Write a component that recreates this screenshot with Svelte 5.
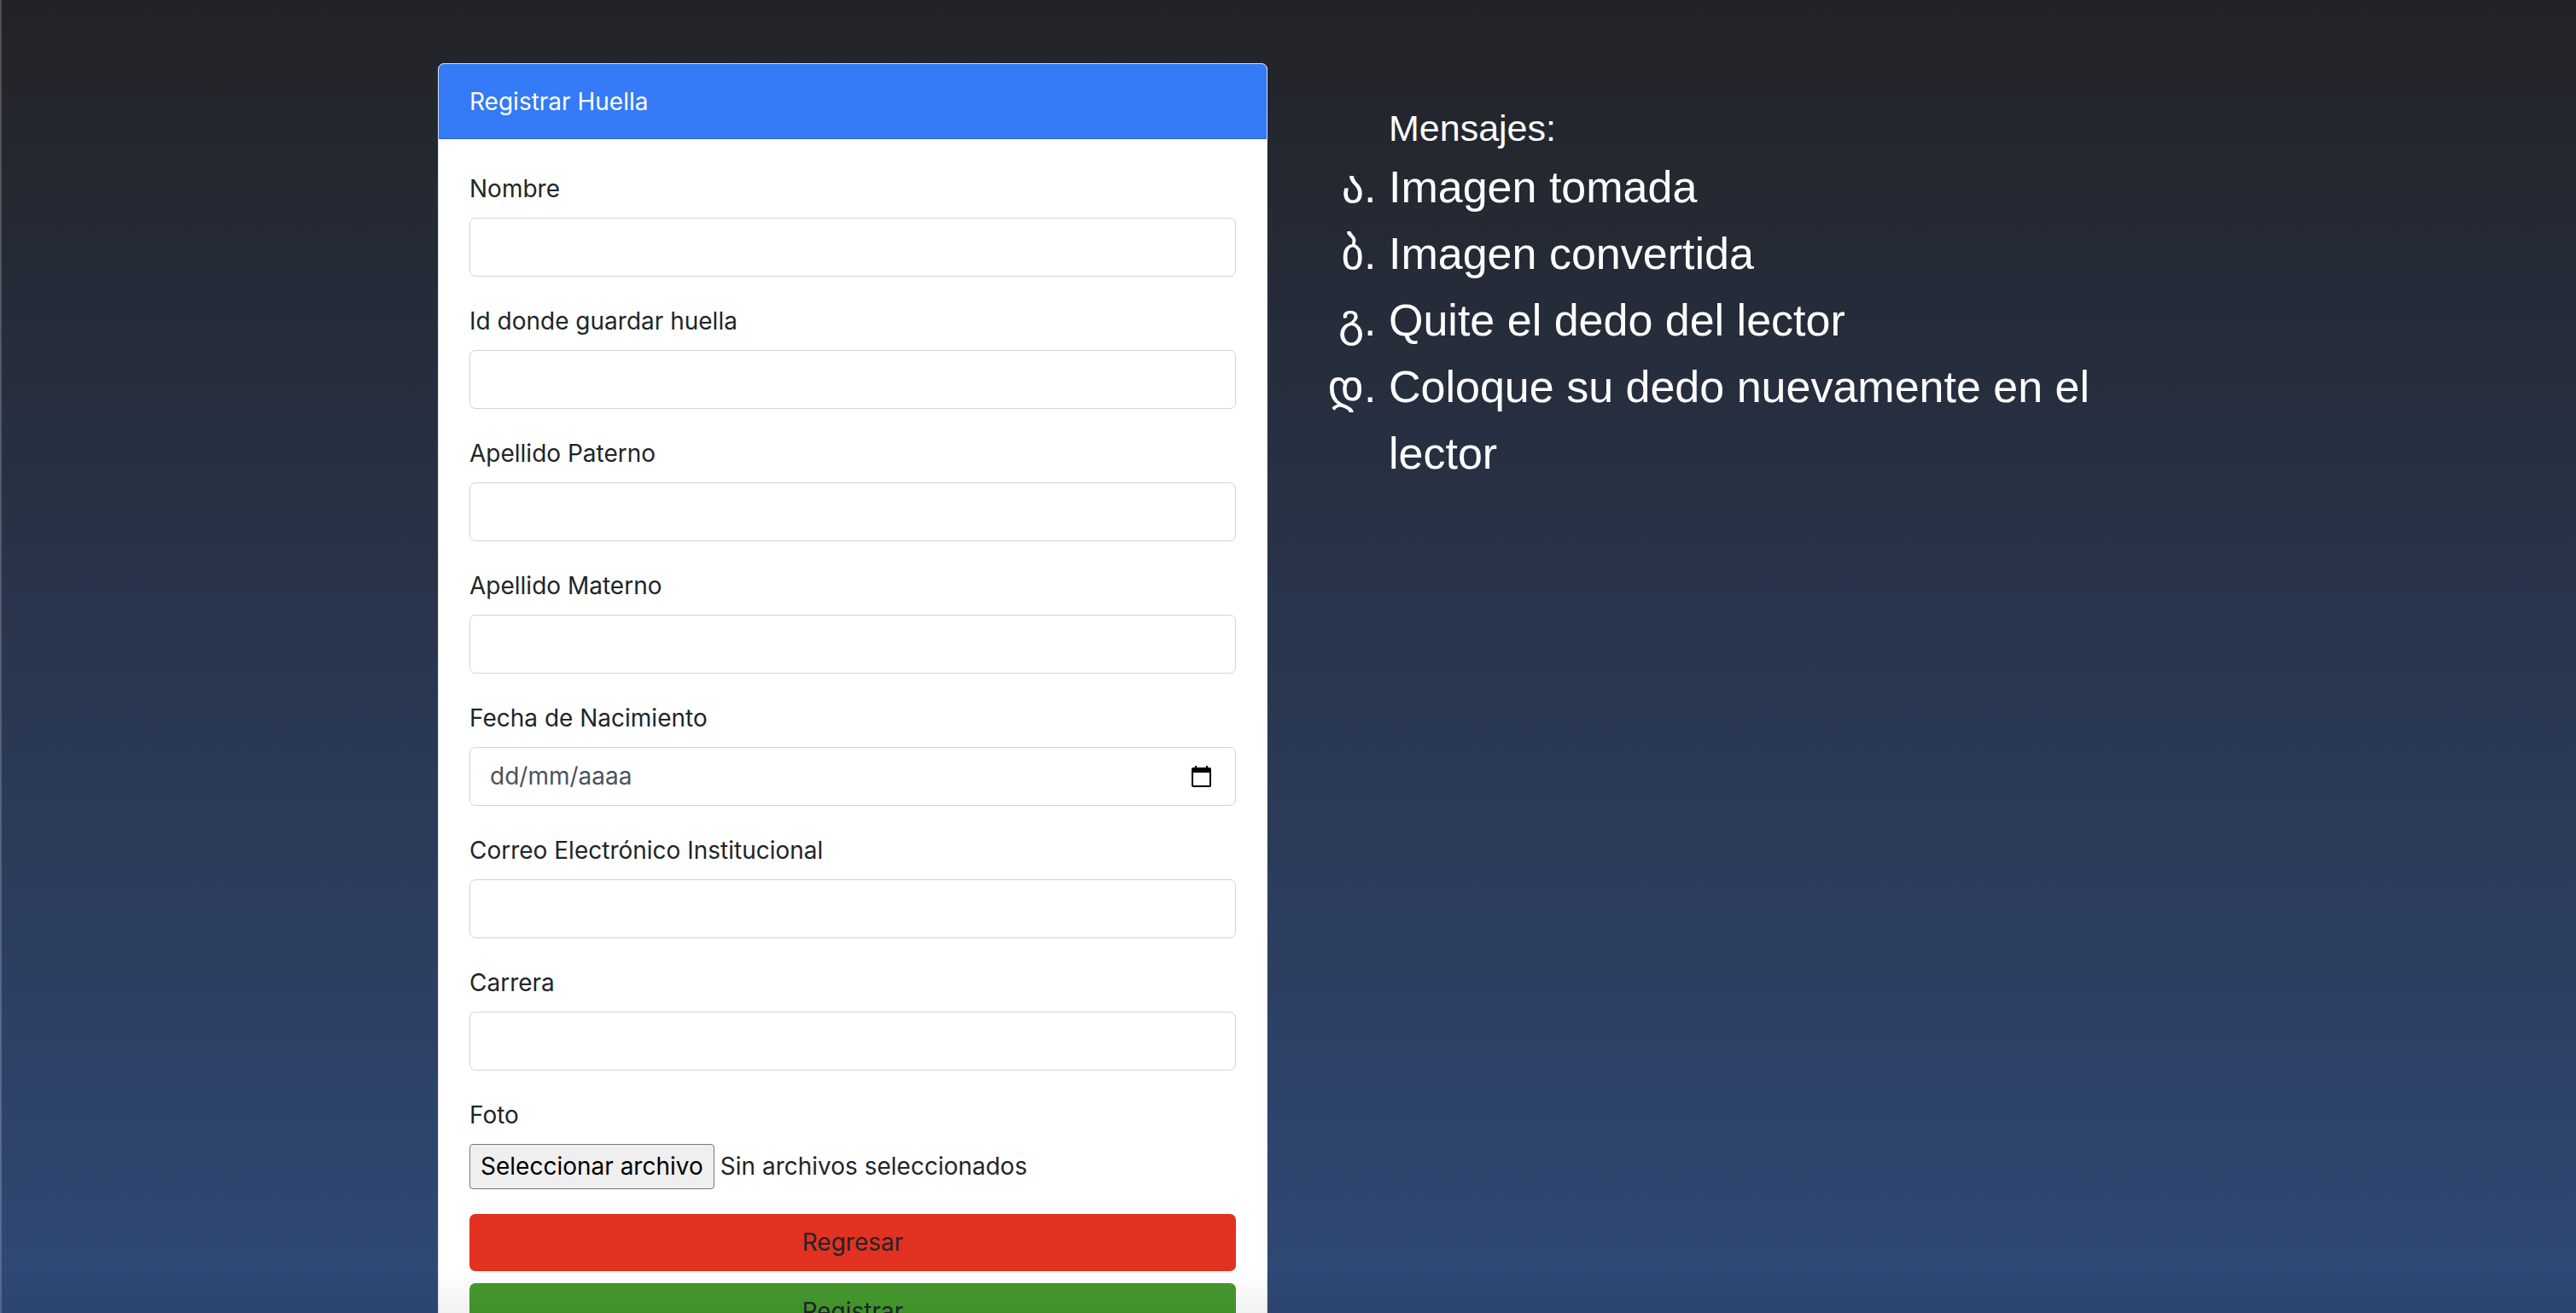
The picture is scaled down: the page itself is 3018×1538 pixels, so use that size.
<script>
  const before = [
    { id: 'nombre', label: 'Nombre' },
    { id: 'id-huella', label: 'Id donde guardar huella' },
    { id: 'apellido-paterno', label: 'Apellido Paterno' },
    { id: 'apellido-materno', label: 'Apellido Materno' }
  ];
  const after = [
    { id: 'correo', label: 'Correo Electrónico Institucional' },
    { id: 'carrera', label: 'Carrera' }
  ];
  const messages = [
    'Imagen tomada',
    'Imagen convertida',
    'Quite el dedo del lector',
    'Coloque su dedo nuevamente en el lector'
  ];
  let fileInput = $state();
  let files = $state();
</script>

{#snippet field(item)}
  <div class="field">
    <label for={item.id}>{item.label}</label>
    <div class="control"><input id={item.id} type="text" /></div>
  </div>
{/snippet}

<div class="page">
  <main class="layout">
    <section class="card">
      <header>Registrar Huella</header>
      <form onsubmit={(e) => e.preventDefault()}>
        {#each before as item}{@render field(item)}{/each}
        <div class="field">
          <label for="fecha">Fecha de Nacimiento</label>
          <div class="control">
            <input id="fecha" type="text" placeholder="dd/mm/aaaa" />
            <button class="calendar" type="button" aria-label="Abrir calendario">
              <svg viewBox="0 0 23 25" width="23" height="25" aria-hidden="true">
                <path d="M4 0h2v2h11V0h2v2h2a2 2 0 0 1 2 2v19a2 2 0 0 1-2 2H2a2 2 0 0 1-2-2V4a2 2 0 0 1 2-2h2zM2 8v15h19V8z" fill-rule="evenodd" />
              </svg>
            </button>
          </div>
        </div>
        {#each after as item}{@render field(item)}{/each}
        <div class="field">
          <label for="foto">Foto</label>
          <div class="file">
            <input id="foto" type="file" bind:this={fileInput} bind:files hidden />
            <button class="choose" type="button" onclick={() => fileInput.click()}>Seleccionar archivo</button>
            <span>{files?.[0]?.name ?? 'Sin archivos seleccionados'}</span>
          </div>
        </div>
        <div class="actions">
          <button class="back" type="button">Regresar</button>
          <button class="submit" type="submit">Registrar</button>
        </div>
      </form>
    </section>

    <section class="messages">
      <h2>Mensajes:</h2>
      <ol>
        {#each messages as message}<li>{message}</li>{/each}
      </ol>
    </section>
  </main>
  <div class="fade"></div>
</div>

<style>
  :global(body) {
    margin: 0;
    overflow: hidden;
  }
  .page,
  .page * {
    box-sizing: border-box;
  }
  .page {
    height: 100vh;
    overflow-y: auto;
    scrollbar-width: none;
    padding: 74px 24px;
    background: linear-gradient(#222326, #304977);
    box-shadow: inset 2px 0 rgba(255, 255, 255, 0.2);
    color: #212529;
    font: 28px/43px Inter, sans-serif;
  }
  .layout {
    display: grid;
    grid-template-columns: 1fr 1fr;
    gap: 48px;
    align-items: start;
    max-width: 1992px;
    margin: 0 auto;
  }
  .card {
    border: 1px solid #dcdde0;
    border-radius: 7px;
    background: #fff;
    overflow: hidden;
  }
  header {
    padding: 23px 36px 21px;
    border-bottom: 1px solid #2d68d2;
    background: #357af6;
    color: #fff;
  }
  form {
    padding: 37px 36px 36px;
  }
  .field + .field {
    margin-top: 31px;
  }
  label {
    display: block;
    margin-bottom: 12px;
  }
  .control {
    display: flex;
    align-items: center;
    height: 69px;
    padding: 0 28px 0 23px;
    border: 1px solid #ced4da;
    border-radius: 7px;
  }
  .control input {
    flex: 1;
    min-width: 0;
    padding: 0;
    border: 0;
    outline: 0;
    background: none;
    color: inherit;
    font: inherit;
  }
  .control input::placeholder {
    color: #4d5358;
    opacity: 1;
  }
  button {
    color: inherit;
    font: inherit;
    cursor: pointer;
  }
  .calendar {
    display: flex;
    padding: 0;
    border: 0;
    background: none;
    color: #000;
  }
  svg {
    display: block;
    fill: currentColor;
  }
  .file {
    display: flex;
    align-items: center;
    gap: 7px;
  }
  .choose {
    padding: 4px 12px;
    border: 1px solid #767676;
    border-radius: 4px;
    background: #efefef;
    color: #000;
  }
  .actions {
    display: grid;
    gap: 14px;
    margin-top: 29px;
  }
  .actions button {
    padding: 12px;
    border: 0;
    border-radius: 7px;
  }
  .back {
    background: #e23222;
  }
  .submit {
    background: #45992e;
  }
  .messages {
    padding: 46px 0 0 94px;
    color: #fff;
    font-family: "Liberation Sans", "DejaVu Sans", sans-serif;
  }
  h2 {
    margin: 0;
    font-size: 43px;
    font-weight: 400;
    line-height: 60px;
  }
  ol {
    margin: 0;
    padding: 0;
    list-style: georgian;
    font-size: 52px;
    line-height: 78px;
  }
  .fade {
    position: fixed;
    inset: auto 0 0 0;
    height: 50px;
    background: linear-gradient(transparent, rgba(0, 0, 0, 0.05));
    pointer-events: none;
  }
</style>
